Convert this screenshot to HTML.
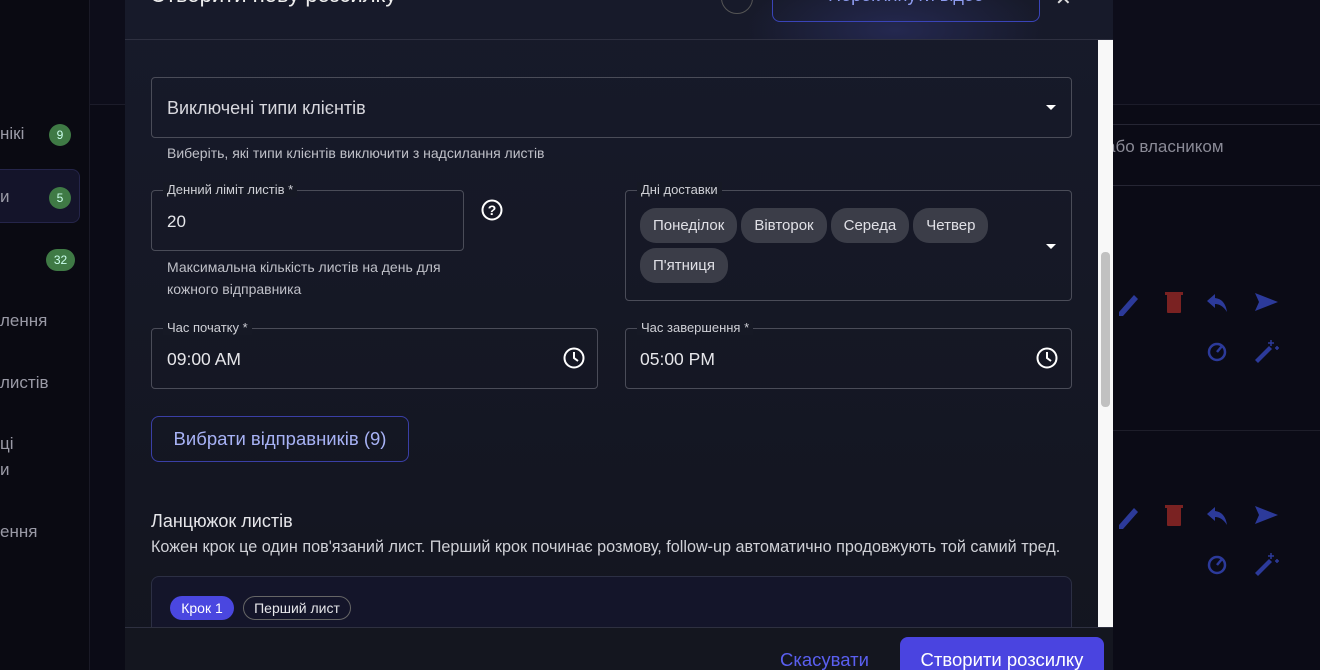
<!DOCTYPE html>
<html><head><meta charset="utf-8"><style>
*{box-sizing:border-box;margin:0;padding:0}
html,body{width:1320px;height:670px;overflow:hidden}
body{background:#0b0b16;font-family:"Liberation Sans",sans-serif;position:relative;color:#e6e6ea}
.abs{position:absolute}
.side{left:0;top:0;width:90px;height:670px;background:#0a0a12;border-right:1px solid #1a1a26}
.sl{color:#9a9aa6;font-size:17px}
.badge{background:#3f7a45;color:#cfe;font-size:12px;border-radius:11px;text-align:center;line-height:22px;height:22px}
.modal{left:125px;top:0;width:988px;height:670px;background:linear-gradient(180deg,#171a2a,#13151f);overflow:hidden}
.field{border:1px solid #4a4c58;border-radius:4px}
.lbl{font-size:13px;color:#cfd0d6;background:#161925;padding:0 4px;top:-9px;left:11px;position:absolute}
.help{font-size:14px;color:#bfc0c8}
.chip{display:inline-block;background:#3b3d48;color:#e0e0e6;border-radius:16px;height:35px;line-height:35px;padding:0 13px;font-size:15px;margin-right:4px}
.arr{width:0;height:0;border-left:5px solid transparent;border-right:5px solid transparent;border-top:5px solid #fff}
.ico{fill:#2c3a9a}
</style></head><body>
<div class="abs side"></div>
<div class="abs" style="left:90px;top:0;width:1230px;height:105px;background:#0d0d1a;border-bottom:1px solid #1c1c2a"></div>
<div class="abs" style="left:1100px;top:124px;width:220px;height:62px;border-top:1px solid #262634;border-bottom:1px solid #262634"></div>
<div class="abs sl" style="left:1106px;top:137px;font-size:17px;color:#8a8a96">або власником</div>
<div class="abs" style="left:1100px;top:430px;width:220px;border-top:1px solid #1e1e2a"></div>
<div class="abs sl" style="left:0;top:124px">нікі</div><div class="abs badge" style="left:49px;top:124px;width:22px">9</div>
<div class="abs" style="left:-10px;top:169px;width:90px;height:54px;background:#14142a;border:1px solid #25254a;border-radius:8px"></div>
<div class="abs sl" style="left:0;top:187px">и</div><div class="abs badge" style="left:49px;top:187px;width:22px">5</div>
<div class="abs badge" style="left:46px;top:249px;width:29px">32</div>
<div class="abs sl" style="left:0;top:311px">лення</div>
<div class="abs sl" style="left:0;top:373px">листів</div>
<div class="abs sl" style="left:0;top:434px">ці</div>
<div class="abs sl" style="left:0;top:460px">и</div>
<div class="abs sl" style="left:0;top:522px">ення</div>
<!-- right icons -->
<svg class="abs" style="left:1115px;top:290px" width="170" height="80"><path class="ico" d="M4 22 L19 5 L23 9 L8 26 L4 26Z"/><rect x="52" y="4" width="14" height="19" rx="1" fill="#7a2222"/><rect x="50" y="2" width="18" height="3" fill="#7a2222"/><path class="ico" d="M92 11 L100 4 L100 8 Q110 9 112 22 Q107 14 100 14 L100 18Z"/><path class="ico" d="M140 3 L163 12 L140 21 L144 12Z"/><circle cx="102" cy="62" r="8" fill="none" stroke="#2c3a9a" stroke-width="2.5"/><path d="M102 62 L107 56" stroke="#2c3a9a" stroke-width="2.5"/><path class="ico" d="M140 70 L154 56 L157 59 L143 73Z"/><path d="M156 50v6M153 53h6M162 56v4M160 58h4" stroke="#2c3a9a" stroke-width="1.5"/></svg>
<svg class="abs" style="left:1115px;top:503px" width="170" height="80"><path class="ico" d="M4 22 L19 5 L23 9 L8 26 L4 26Z"/><rect x="52" y="4" width="14" height="19" rx="1" fill="#7a2222"/><rect x="50" y="2" width="18" height="3" fill="#7a2222"/><path class="ico" d="M92 11 L100 4 L100 8 Q110 9 112 22 Q107 14 100 14 L100 18Z"/><path class="ico" d="M140 3 L163 12 L140 21 L144 12Z"/><circle cx="102" cy="62" r="8" fill="none" stroke="#2c3a9a" stroke-width="2.5"/><path d="M102 62 L107 56" stroke="#2c3a9a" stroke-width="2.5"/><path class="ico" d="M140 70 L154 56 L157 59 L143 73Z"/><path d="M156 50v6M153 53h6M162 56v4M160 58h4" stroke="#2c3a9a" stroke-width="1.5"/></svg>

<div class="abs modal">
 <div class="abs" style="left:0;top:0;width:988px;height:40px;border-bottom:1px solid #2e3040;background:radial-gradient(ellipse 150px 60px at 770px 30px,#242850,transparent)"></div>
 <div class="abs" style="left:25px;top:-18px;font-size:22px;color:#eee">Створити нову розсилку</div>
 <div class="abs" style="left:596px;top:-18px;width:32px;height:32px;border:1px solid #555;border-radius:50%"></div>
 <div class="abs" style="left:647px;top:-12px;width:268px;height:34px;border:1px solid #3a44b8;border-radius:8px;color:#8e9cf0;font-size:18px;text-align:center;line-height:12px">Переглянути відео</div>
 <div class="abs" style="left:930px;top:-14px;font-size:20px;color:#ddd">✕</div>
 <div class="abs" style="left:973px;top:40px;width:15px;height:587px;background:#f8f8f8"></div>
 <div class="abs" style="left:976px;top:252px;width:9px;height:155px;background:#c1c1c1;border-radius:4px"></div>

 <div class="abs field" style="left:26px;top:77px;width:921px;height:61px"></div>
 <div class="abs" style="left:42px;top:98px;font-size:18px;color:#d8d8de">Виключені типи клієнтів</div>
 <div class="abs arr" style="left:921px;top:105px"></div>
 <div class="abs help" style="left:42px;top:145px">Виберіть, які типи клієнтів виключити з надсилання листів</div>

 <div class="abs field" style="left:26px;top:190px;width:313px;height:61px"><span class="lbl">Денний ліміт листів *</span></div>
 <div class="abs" style="left:42px;top:212px;font-size:17px">20</div>
 <svg class="abs" style="left:356px;top:199px" width="22" height="22"><circle cx="11" cy="11" r="9.5" fill="none" stroke="#fff" stroke-width="2"/><text x="11" y="16" font-size="14" font-weight="bold" text-anchor="middle" fill="#fff" font-family="Liberation Sans">?</text></svg>
 <div class="abs help" style="left:42px;top:256px;line-height:22px">Максимальна кількість листів на день для<br>кожного відправника</div>

 <div class="abs field" style="left:500px;top:190px;width:447px;height:111px"><span class="lbl">Дні доставки</span></div>
 <div class="abs" style="left:515px;top:208px;width:380px"><span class="chip">Понеділок</span><span class="chip">Вівторок</span><span class="chip">Середа</span><span class="chip">Четвер</span></div>
 <div class="abs" style="left:515px;top:248px"><span class="chip">П'ятниця</span></div>
 <div class="abs arr" style="left:921px;top:244px"></div>

 <div class="abs field" style="left:26px;top:328px;width:447px;height:61px"><span class="lbl">Час початку *</span></div>
 <div class="abs" style="left:42px;top:349px;font-size:17.5px">09:00 AM</div>
 <svg class="abs" style="left:438px;top:347px" width="22" height="22"><circle cx="11" cy="11" r="9.5" fill="none" stroke="#fff" stroke-width="2"/><path d="M11 5V11L15 14" stroke="#fff" stroke-width="2" fill="none"/></svg>
 <div class="abs field" style="left:500px;top:328px;width:447px;height:61px"><span class="lbl">Час завершення *</span></div>
 <div class="abs" style="left:515px;top:349px;font-size:17.5px">05:00 PM</div>
 <svg class="abs" style="left:911px;top:347px" width="22" height="22"><circle cx="11" cy="11" r="9.5" fill="none" stroke="#fff" stroke-width="2"/><path d="M11 5V11L15 14" stroke="#fff" stroke-width="2" fill="none"/></svg>

 <div class="abs" style="left:26px;top:416px;width:258px;height:46px;border:1px solid #3a3fa6;border-radius:8px;color:#a7b2f5;font-size:18.5px;line-height:44px;text-align:center">Вибрати відправників (9)</div>

 <div class="abs" style="left:26px;top:511px;font-size:18px">Ланцюжок листів</div>
 <div class="abs" style="left:26px;top:538px;font-size:16.2px;color:#cfd0d6;white-space:nowrap">Кожен крок це один пов'язаний лист. Перший крок починає розмову, follow-up автоматично продовжують той самий тред.</div>
 <div class="abs" style="left:26px;top:576px;width:921px;height:60px;border:1px solid #2c2f44;border-radius:8px;background:#14152a"></div>
 <div class="abs" style="left:45px;top:596px;width:64px;height:24px;background:#4a47e0;border-radius:12px;font-size:14px;line-height:24px;text-align:center;color:#fff">Крок 1</div>
 <div class="abs" style="left:118px;top:596px;width:108px;height:24px;border:1px solid #666;border-radius:12px;font-size:14px;line-height:22px;text-align:center">Перший лист</div>

 <div class="abs" style="left:0;top:627px;width:988px;height:43px;background:#14161f;border-top:1px solid #2e3040"></div>
 <div class="abs" style="left:655px;top:649px;font-size:18.5px;color:#5a5ff0">Скасувати</div>
 <div class="abs" style="left:775px;top:637px;width:204px;height:45px;background:#4a44e0;border-radius:8px;color:#fff;font-size:18.5px;text-align:center;line-height:45px">Створити розсилку</div>
</div>
</body></html>
